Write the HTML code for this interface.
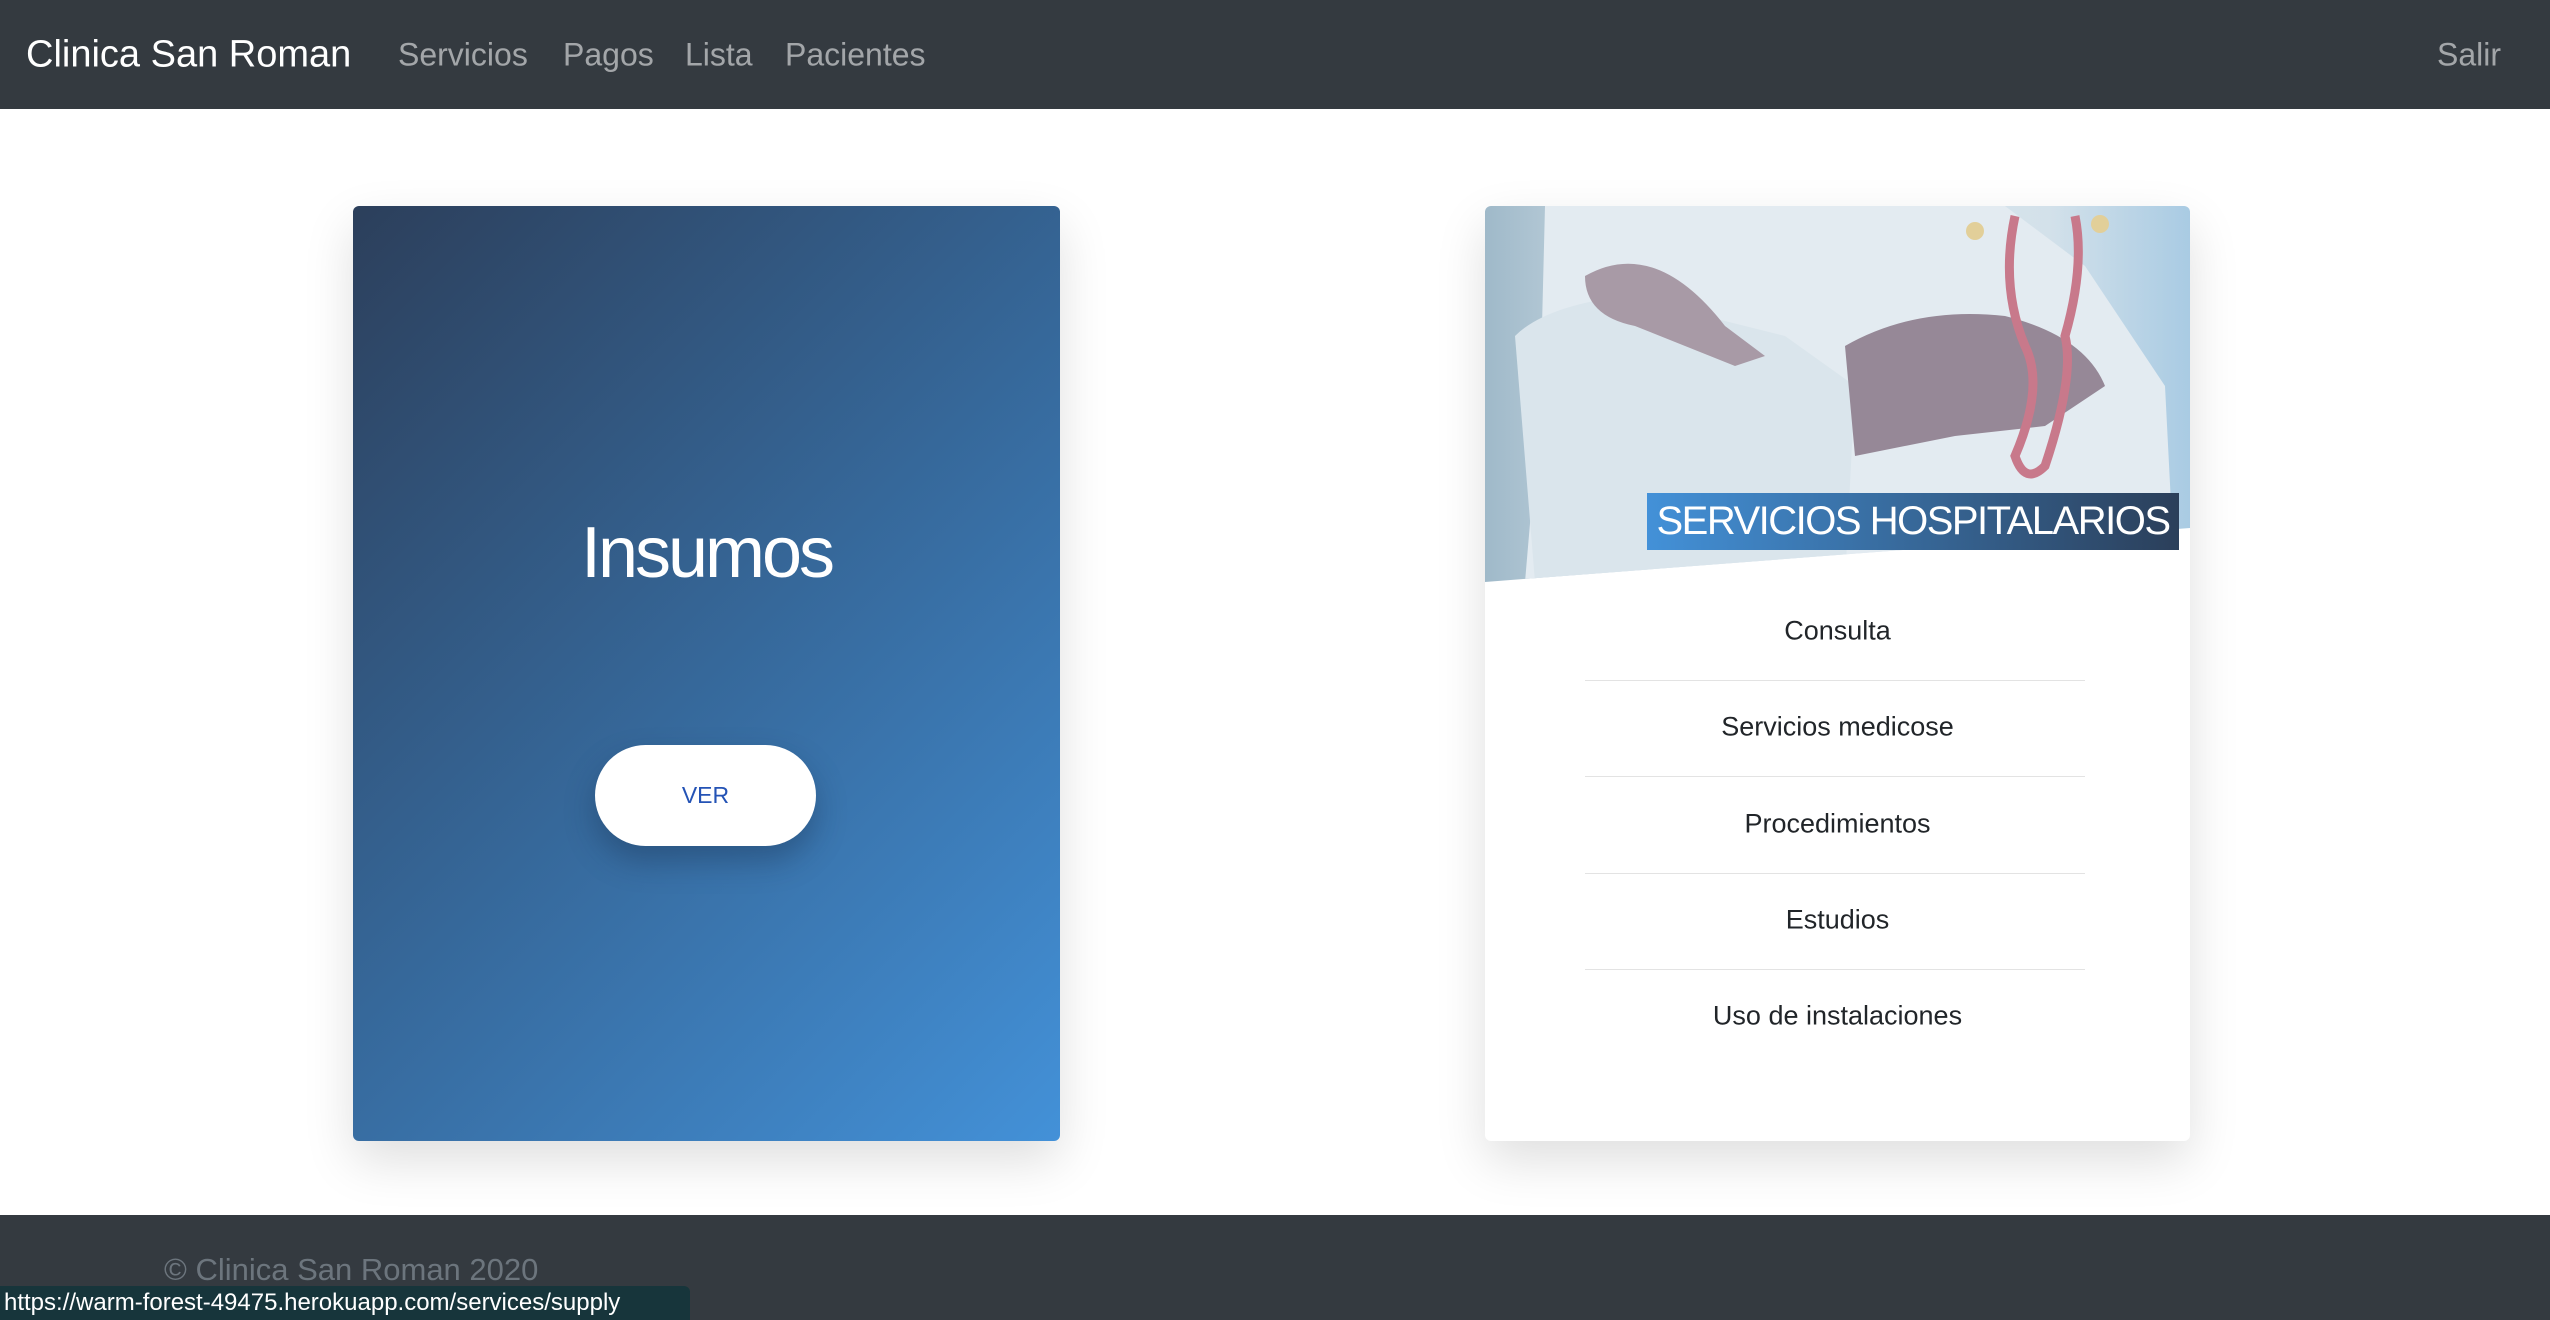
<!DOCTYPE html>
<html><head><meta charset="utf-8"><style>
*{margin:0;padding:0;box-sizing:border-box}
body{width:2550px;height:1320px;background:#fff;font-family:"Liberation Sans",sans-serif;position:relative;overflow:hidden}
.nav{position:absolute;left:0;top:0;width:2550px;height:109px;background:#343a40}
.nav span{position:absolute;top:55px;transform:translateY(-50%);color:rgba(255,255,255,.55);font-size:32px;white-space:nowrap}
.nav .brand{color:#fff;font-size:38px;left:26px}
.card{position:absolute;top:206px;height:935px;border-radius:6px;box-shadow:0 20px 50px rgba(0,0,0,.13)}
.c1{left:353px;width:707px;background:linear-gradient(135deg,#2c3f5b 0%,#36689a 50%,#4391d8 100%)}
.ins{position:absolute;left:0;width:100%;text-align:center;top:306px;color:#fff;font-size:72px;font-weight:300;letter-spacing:-3px}
.btn{position:absolute;left:595px;top:745px;width:221px;height:101px;border-radius:51px;background:#fff;box-shadow:0 15px 30px rgba(20,40,70,.35);color:#2453b5;font-size:23px;text-align:center;line-height:101px}
.c2{left:1485px;width:705px;background:#fff;overflow:hidden}
.img{position:absolute;left:0;top:0;width:705px;height:376px;clip-path:polygon(0 0,100% 0,100% 322px,0 376px);background:linear-gradient(90deg,#9fb9c9 0%,#c9d8e2 20%,#dbe6ee 50%,#d3e1ea 80%,#a9cbe3 100%)}
.banner{position:absolute;left:162px;top:287px;width:532px;height:57px;background:linear-gradient(90deg,#4391d8,#2b3f5a);color:#fff;font-size:40px;line-height:57px;text-align:center;white-space:nowrap;letter-spacing:-1.5px}
.item{position:absolute;left:0;width:705px;text-align:center;font-size:27px;color:#212529;transform:translateY(-50%)}
.sep{position:absolute;left:100px;width:500px;height:1px;background:#e3e3e3}
.foot{position:absolute;left:0;top:1215px;width:2550px;height:105px;background:#343a40}
.foot span{position:absolute;left:164px;top:55px;transform:translateY(-50%);color:#6c757d;font-size:31px}
.status{position:absolute;left:0;top:1286px;width:690px;height:34px;background:#17353b;border-top-right-radius:6px;color:#fff;font-size:24px;line-height:34px;padding-left:4px;white-space:nowrap}
</style></head><body>
<div class="nav">
<span class="brand">Clinica San Roman</span>
<span style="left:398px">Servicios</span>
<span style="left:563px">Pagos</span>
<span style="left:685px">Lista</span>
<span style="left:785px">Pacientes</span>
<span style="left:2437px">Salir</span>
</div>
<div class="card c1"><div class="ins">Insumos</div></div>
<div class="btn">VER</div>
<div class="card c2">
<div class="img">
<svg width="705" height="376" viewBox="0 0 705 376">
<path d="M60 0 L520 0 L600 60 L680 180 L690 376 L40 376 L55 200 Z" fill="#e3ebf1"/>
<path d="M30 130 Q60 100 140 90 L300 130 L370 180 L360 376 L50 376 Z" fill="#dae5ec"/>
<path d="M100 70 Q170 30 240 120 L280 150 L250 160 L150 120 Q100 110 100 70Z" fill="#a89aa6"/>
<path d="M360 140 Q430 100 520 110 Q600 130 620 180 L560 220 L470 230 L370 250 Z" fill="#968897"/>
<g fill="none" stroke="#c8798b" stroke-width="9">
<path d="M530 10 Q515 80 540 140 Q560 180 530 250 Q540 280 560 260 Q590 170 580 130 Q600 60 590 10"/>
</g>
<circle cx="490" cy="25" r="9" fill="#e2cf99"/><circle cx="615" cy="18" r="9" fill="#e2cf99"/>
</svg>
</div>
<div class="banner">SERVICIOS HOSPITALARIOS</div>
<div class="item" style="top:425px">Consulta</div>
<div class="sep" style="top:474px"></div>
<div class="item" style="top:521px">Servicios medicose</div>
<div class="sep" style="top:570px"></div>
<div class="item" style="top:618px">Procedimientos</div>
<div class="sep" style="top:667px"></div>
<div class="item" style="top:714px">Estudios</div>
<div class="sep" style="top:763px"></div>
<div class="item" style="top:810px">Uso de instalaciones</div>
</div>
<div class="foot"><span>© Clinica San Roman 2020</span></div>
<div class="status">https://warm-forest-49475.herokuapp.com/services/supply</div>
</body></html>
